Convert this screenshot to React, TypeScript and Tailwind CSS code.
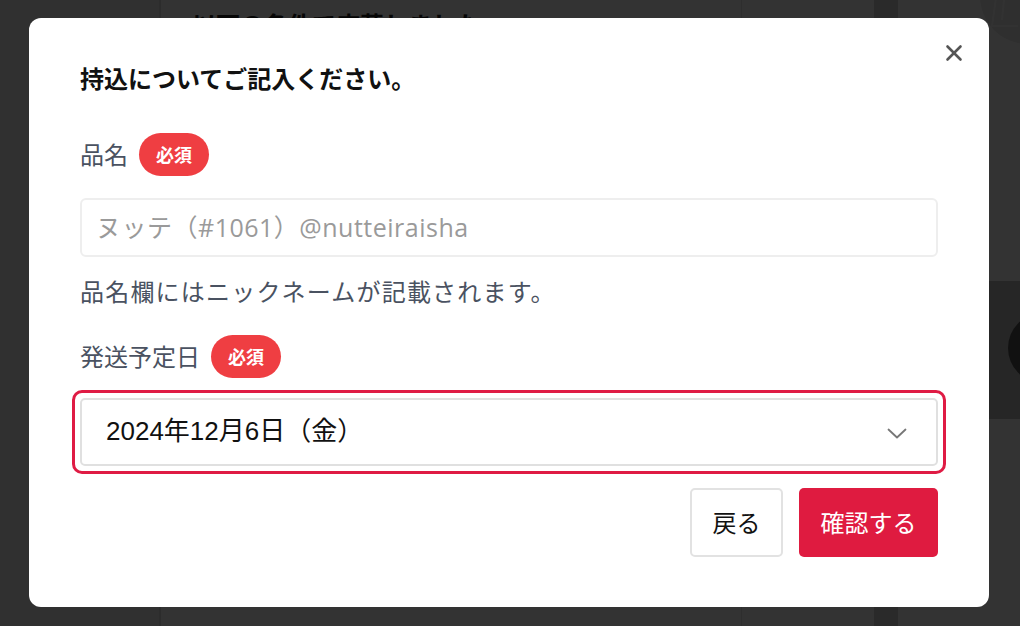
import React, { useState } from 'react';
import { X } from 'lucide-react';

const jp = { fontFamily: '"Noto Sans CJK JP", "Noto Sans", sans-serif' };
const latinFirst = { fontFamily: '"Open Sans", "Noto Sans CJK JP", sans-serif' };
const selectFont = { fontFamily: '"Liberation Sans", "Noto Sans CJK JP", sans-serif' };

const Required: React.FC = () => (
  <span className="inline-flex h-[43px] w-[70px] items-center justify-center rounded-full bg-[#ef3e42] text-[18px] font-bold text-white">
    必須
  </span>
);

const dates = ['2024年12月6日（金）', '2024年12月7日（土）', '2024年12月9日（月）'];

const BackgroundPage: React.FC = () => (
  <div className="flex h-[626px] w-full overflow-hidden bg-white">
    <aside className="w-[161px] shrink-0 border-r-2 border-[#dcdcdc] bg-[#f0f0f0]" />
    <main className="w-[580px] shrink-0 px-[31px] pt-[6px]">
      <h2 className="text-[24px] font-bold text-[#222]">以下の条件で応募しました</h2>
    </main>
    <section className="w-[133px] shrink-0 border-l border-[#e6e6e6]" />
    <div className="w-[24px] shrink-0 bg-[#d2d2d2]" />
    <div className="relative flex-1">
      <div className="absolute left-[82px] top-[-52px] h-[96px] w-[96px] rounded-full bg-[#e8e8e8]">
        <svg className="absolute left-[8px] top-[48px]" width="40" height="40" viewBox="0 0 40 40" fill="none" stroke="#fafafa" strokeWidth="2">
          <path d="M8 2 L4 30 L30 30" />
          <path d="M16 4 L14 24" />
        </svg>
      </div>
      <div className="mt-[281px] h-[138px] bg-[#bdbdbd]">
        <div className="relative left-[110px] top-[32px] h-[70px] w-[70px] rounded-full bg-[#555]" />
      </div>
    </div>
  </div>
);

export default function App() {
  const [date, setDate] = useState(dates[0]);

  return (
    <div className="relative h-[626px] w-[1020px] overflow-hidden" style={jp}>
      <BackgroundPage />
      <div className="absolute inset-0 flex items-center justify-center bg-black/80 pb-[2px] pr-[2px]">
        <div className="relative h-[589px] w-[960px] rounded-[12px] bg-white px-[51px] pt-[43px]">
          <button className="absolute right-[22px] top-[22px] text-[#555]" aria-label="閉じる">
            <X size={26} strokeWidth={2.4} />
          </button>

          <h3 className="text-[24px] font-bold leading-[34px] text-[#111]">持込についてご記入ください。</h3>

          <div className="mt-[38px] flex h-[43px] items-center gap-[11px]">
            <span className="text-[24px] text-[#4a5261]">品名</span>
            <Required />
          </div>
          <input
            style={latinFirst}
            className="mt-[22px] h-[59px] w-full rounded-[6px] border-2 border-[#eeeeee] px-[14px] text-[25px] tracking-[0.5px] outline-none placeholder:text-[#9a9a9a]"
            placeholder="ヌッテ（#1061）@nutteiraisha"
          />
          <p className="mt-[16px] text-[24px] leading-[36px] tracking-[1.2px] text-[#4a5261]">品名欄にはニックネームが記載されます。</p>

          <div className="mt-[26px] flex h-[43px] items-center gap-[11px]">
            <span className="text-[24px] text-[#4a5261]">発送予定日</span>
            <Required />
          </div>

          <div className="relative -mx-[8px] mt-[12px] rounded-[10px] border-[3px] border-[#df1b44] p-[5px]">
            <select
              value={date}
              onChange={(e) => setDate(e.target.value)}
              style={selectFont}
              className="h-[68px] w-full appearance-none rounded-[5px] border-2 border-[#e0e0e0] bg-white px-[24px] text-[26px] text-[#111] outline-none"
            >
              {dates.map((d) => (
                <option key={d}>{d}</option>
              ))}
            </select>
            <svg
              className="pointer-events-none absolute right-[36px] top-[35px]"
              width="20"
              height="11"
              viewBox="0 0 20 11"
              fill="none"
              stroke="#777"
              strokeWidth="1.8"
              strokeLinecap="round"
              strokeLinejoin="round"
            >
              <polyline points="1.5 1.5 10 9.5 18.5 1.5" />
            </svg>
          </div>

          <div className="mt-[14px] flex justify-end gap-[16px]">
            <button className="h-[69px] w-[93px] rounded-[5px] border-2 border-[#e2e2e2] bg-white text-[24px] text-[#111]">
              戻る
            </button>
            <button className="h-[69px] w-[139px] rounded-[5px] bg-[#df1b40] text-[24px] text-white">確認する</button>
          </div>
        </div>
      </div>
    </div>
  );
}
